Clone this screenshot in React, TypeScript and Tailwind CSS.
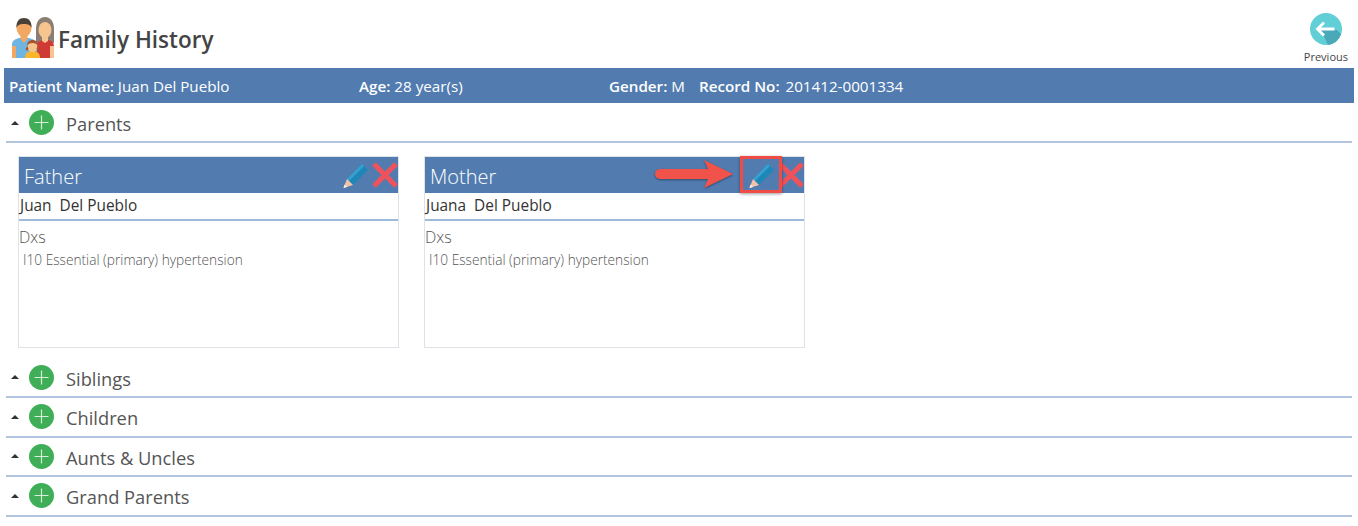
const font = "[font-family:'Open_Sans','Noto_Sans',sans-serif]";

function FamilyIcon() {
  return (
    <svg width="42" height="42" viewBox="0 0 42 42">
      {/* mother */}
      <path d="M24 12C24 4 28 0 33 0S42 4 42 12V26H24z" fill="#8a7d74" />
      <path d="M24 29c0-3 3-5 6-6h7c3 1 5 3 5 6v12H24z" fill="#cf3a35" />
      <path d="M38 29h4v12h-4z" fill="#f6c48e" />
      <ellipse cx="33" cy="13" rx="6.500" ry="8" fill="#f6c48e" />
      <path d="M30 19h6v5l-3 2-3-2z" fill="#f6c48e" />
      {/* father */}
      <path d="M0 27c0-3 3-5 7-6h10c4 1 8 3 8 6v14H0z" fill="#6fb5e3" />
      <path d="M0 29h4v12H0z" fill="#f2a863" />
      <path d="M8.500 18h7v4l-3.500 4-3.500-4z" fill="#f2a863" />
      <ellipse cx="12" cy="11" rx="7.500" ry="9" fill="#f2a863" />
      <path d="M4.500 11C4 4 7.500 1 12 1s8 3 7.500 10c-1-3-3-4-7.500-4s-6.500 1-7.500 4z" fill="#4a4038" />
      {/* child */}
      <path d="M13 41c0-5 3-7 7.500-7s7.500 2 7.500 7z" fill="#f7b62e" />
      <ellipse cx="20.500" cy="29.500" rx="5" ry="5.500" fill="#f6c48e" />
      <path d="M15 29c0-4 2.500-6 5.500-6s5.500 2 5.500 6c-1-2-3-3-5.500-3s-4.500 1-5.500 3z" fill="#a7552c" />
      <path d="M13.500 32l2-3 1 3-1.500 2zM27.500 32l-2-3-1 3 1.500 2z" fill="#a7552c" />
    </svg>
  );
}

function PencilIcon() {
  return (
    <svg className="mr-[2px]" width="28" height="28" viewBox="0 0 28 28">
      <path d="M20 3 26 9 11 24 5 18z" fill="#1f86b8" />
      <path d="M20 3 22 5 7 20 5 18z" fill="#36a0cf" />
      <path d="M5 18 11 24 1.500 27z" fill="#f2c3ab" />
      <path d="M2.500 23.500 5 26 1.500 27z" fill="#fbeee6" />
    </svg>
  );
}

function CrossIcon() {
  return (
    <svg width="26" height="26" viewBox="0 0 26 26">
      <path d="M2 2 24 24M24 2 2 24" stroke="#f0525c" strokeWidth="5" />
    </svg>
  );
}

function PlusButton() {
  return (
    <svg width="25" height="25" viewBox="0 0 25 25">
      <circle cx="12.500" cy="12.500" r="12.500" fill="#3fae56" />
      <path d="M12.500 5.500v14M5.500 12.500h14" stroke="#d5efd9" strokeWidth="1.200" />
    </svg>
  );
}

function Section({ title, first }: { title: string; first?: boolean }) {
  return (
    <div className={`mx-[6px] flex h-[39.500px] items-center border-b-2 border-[#b3c5de] ${first ? "pt-[2px]" : ""}`}>
      <span className="ml-[5px] mr-[10px] h-0 w-0 border-x-[4px] border-b-[4px] border-x-transparent border-b-[#333]" />
      <PlusButton />
      <span className="ml-[12px] mt-[2px] text-[18.300px] text-[#555]">{title}</span>
    </div>
  );
}

function RelativeCard({ relation, name, marked }: { relation: string; name: string; marked?: boolean }) {
  return (
    <div className="relative h-[192px] w-[381px] border border-[#dfe3e8] bg-white">
      <div className="flex h-[36px] items-center justify-between bg-[#527cb0] pl-[5px]">
        <span className="mt-[4px] text-[20px] font-light text-white">{relation}</span>
        <div className="flex items-center">
          <PencilIcon />
          <CrossIcon />
        </div>
      </div>
      <div className="flex h-[28px] items-center border-b-2 border-[#9dbbdc] pl-[1px] pt-[1px] text-[15.400px] whitespace-pre text-[#333]">
        {name}
      </div>
      <div className="pt-[5px] text-[16px] leading-[22px] font-light text-[#555]">Dxs</div>
      <div className="pl-[4px] pt-[3px] text-[13.700px] leading-[18px] font-light text-[#555]">
        I10 Essential (primary) hypertension
      </div>
      {marked && (
        <>
          <div className="absolute right-[22px] top-[-1px] h-[37px] w-[42px] border-[3px] border-[#ee4c45] shadow-[0_1px_3px_rgba(0,0,0,0.4)]" />
          <svg
            className="absolute left-[229px] top-[2px] drop-shadow-[0_1px_1px_rgba(0,0,0,0.4)]"
            width="80"
            height="30"
            viewBox="0 0 80 30"
          >
            <path d="M6 10H54L50 1 79 15 50 29 54 20H6a5 5 0 0 1 0-10z" fill="#f1524a" />
          </svg>
        </>
      )}
    </div>
  );
}

export default function App() {
  return (
    <div className={`h-[526px] w-[1358px] overflow-hidden bg-white ${font}`}>
      <header className="flex h-[68px] justify-between pl-[12px] pr-[10px]">
        <div className="flex items-start pt-[17px]">
          <FamilyIcon />
          <h1 className="ml-[4px] mt-[6px] text-[22.500px] leading-[34px] font-semibold text-[#444]">Family History</h1>
        </div>
        <div className="flex flex-col items-center pt-[13px]">
          <svg width="32" height="32" viewBox="0 0 32 32">
            <circle cx="16" cy="16" r="16" fill="#62cfd6" />
            <path d="M11 17 27 17 31 21A16 16 0 0 1 18 32z" fill="#4aa9b8" />
            <path d="M7.500 16h17M14 9.500 7.500 16l6.500 6.500" fill="none" stroke="#fff" strokeWidth="2.800" />
          </svg>
          <span className="mt-[3px] text-[11px] leading-[18px] text-[#444]">Previous</span>
        </div>
      </header>

      <div className="mx-[4px] flex h-[35px] items-center bg-[#527cb0] pt-[1px] text-[15.200px] text-white">
        <div className="w-[355px] pl-[5px]">
          <b className="font-semibold">Patient Name:</b> Juan Del Pueblo
        </div>
        <div className="w-[250px]">
          <b className="font-semibold">Age:</b> 28 year(s)
        </div>
        <div className="w-[90px]">
          <b className="font-semibold">Gender:</b> M
        </div>
        <div>
          <b className="font-semibold">Record No:</b> <span className="ml-[2px]">201412-0001334</span>
        </div>
      </div>

      <Section title="Parents" first />
      <div className="flex h-[216px] gap-[25px] pl-[18px] pt-[13px]">
        <RelativeCard relation="Father" name="Juan  Del Pueblo" />
        <RelativeCard relation="Mother" name="Juana  Del Pueblo" marked />
      </div>
      <Section title="Siblings" />
      <Section title="Children" />
      <Section title="Aunts & Uncles" />
      <Section title="Grand Parents" />
    </div>
  );
}
